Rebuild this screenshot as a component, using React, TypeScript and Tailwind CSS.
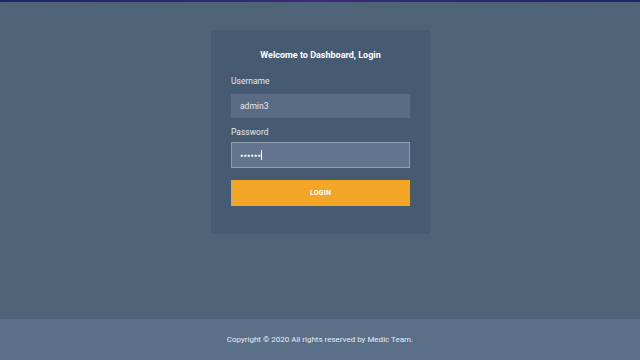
export default function App() {
  return (
    <div
      className="w-[640px] h-[360px] flex flex-col bg-[#4e6278] overflow-hidden"
      style={{ fontFamily: 'Roboto, "Liberation Sans", sans-serif' }}
    >
      <div className="h-[2px] bg-gradient-to-r from-[#1b2660] via-[#3a2a7a] to-[#1b2660]" />
      <div className="flex-1 flex justify-center pt-[28px]">
        <div className="w-[219px] h-[204px] ml-px bg-[#465a71] px-[20px] pt-[19px]">
          <h1 className="text-center text-white font-bold text-[9px] leading-[12px]">
            Welcome to Dashboard, Login
          </h1>
          <label className="block mt-[15px] text-[8.5px] leading-[11px] text-[#e4e9ef]">Username</label>
          <div className="mt-[7px] h-[24px] bg-[#5a6c84] flex items-center px-[9px] text-[8.5px] text-[#e4e9ef]">
            admin3
          </div>
          <label className="block mt-[9px] text-[8.5px] leading-[11px] text-[#e4e9ef]">Password</label>
          <div className="mt-[4px] h-[26px] bg-[#63758e] border border-[#8e9db0] flex items-center px-[8px] text-white">
            <span className="text-[5px] leading-none tracking-[0.5px]">●●●●●●</span>
            <span className="w-px h-[10px] bg-white" />
          </div>
          <button className="mt-[12px] w-full h-[26px] bg-[#f3a626] text-white font-bold text-[7px] tracking-wide">
            LOGIN
          </button>
        </div>
      </div>
      <div className="h-[41px] bg-[#5a6f88] flex items-center justify-center text-[8px] text-[#e8edf3]">
        Copyright © 2020 All rights reserved by Medic Team.
      </div>
    </div>
  );
}
